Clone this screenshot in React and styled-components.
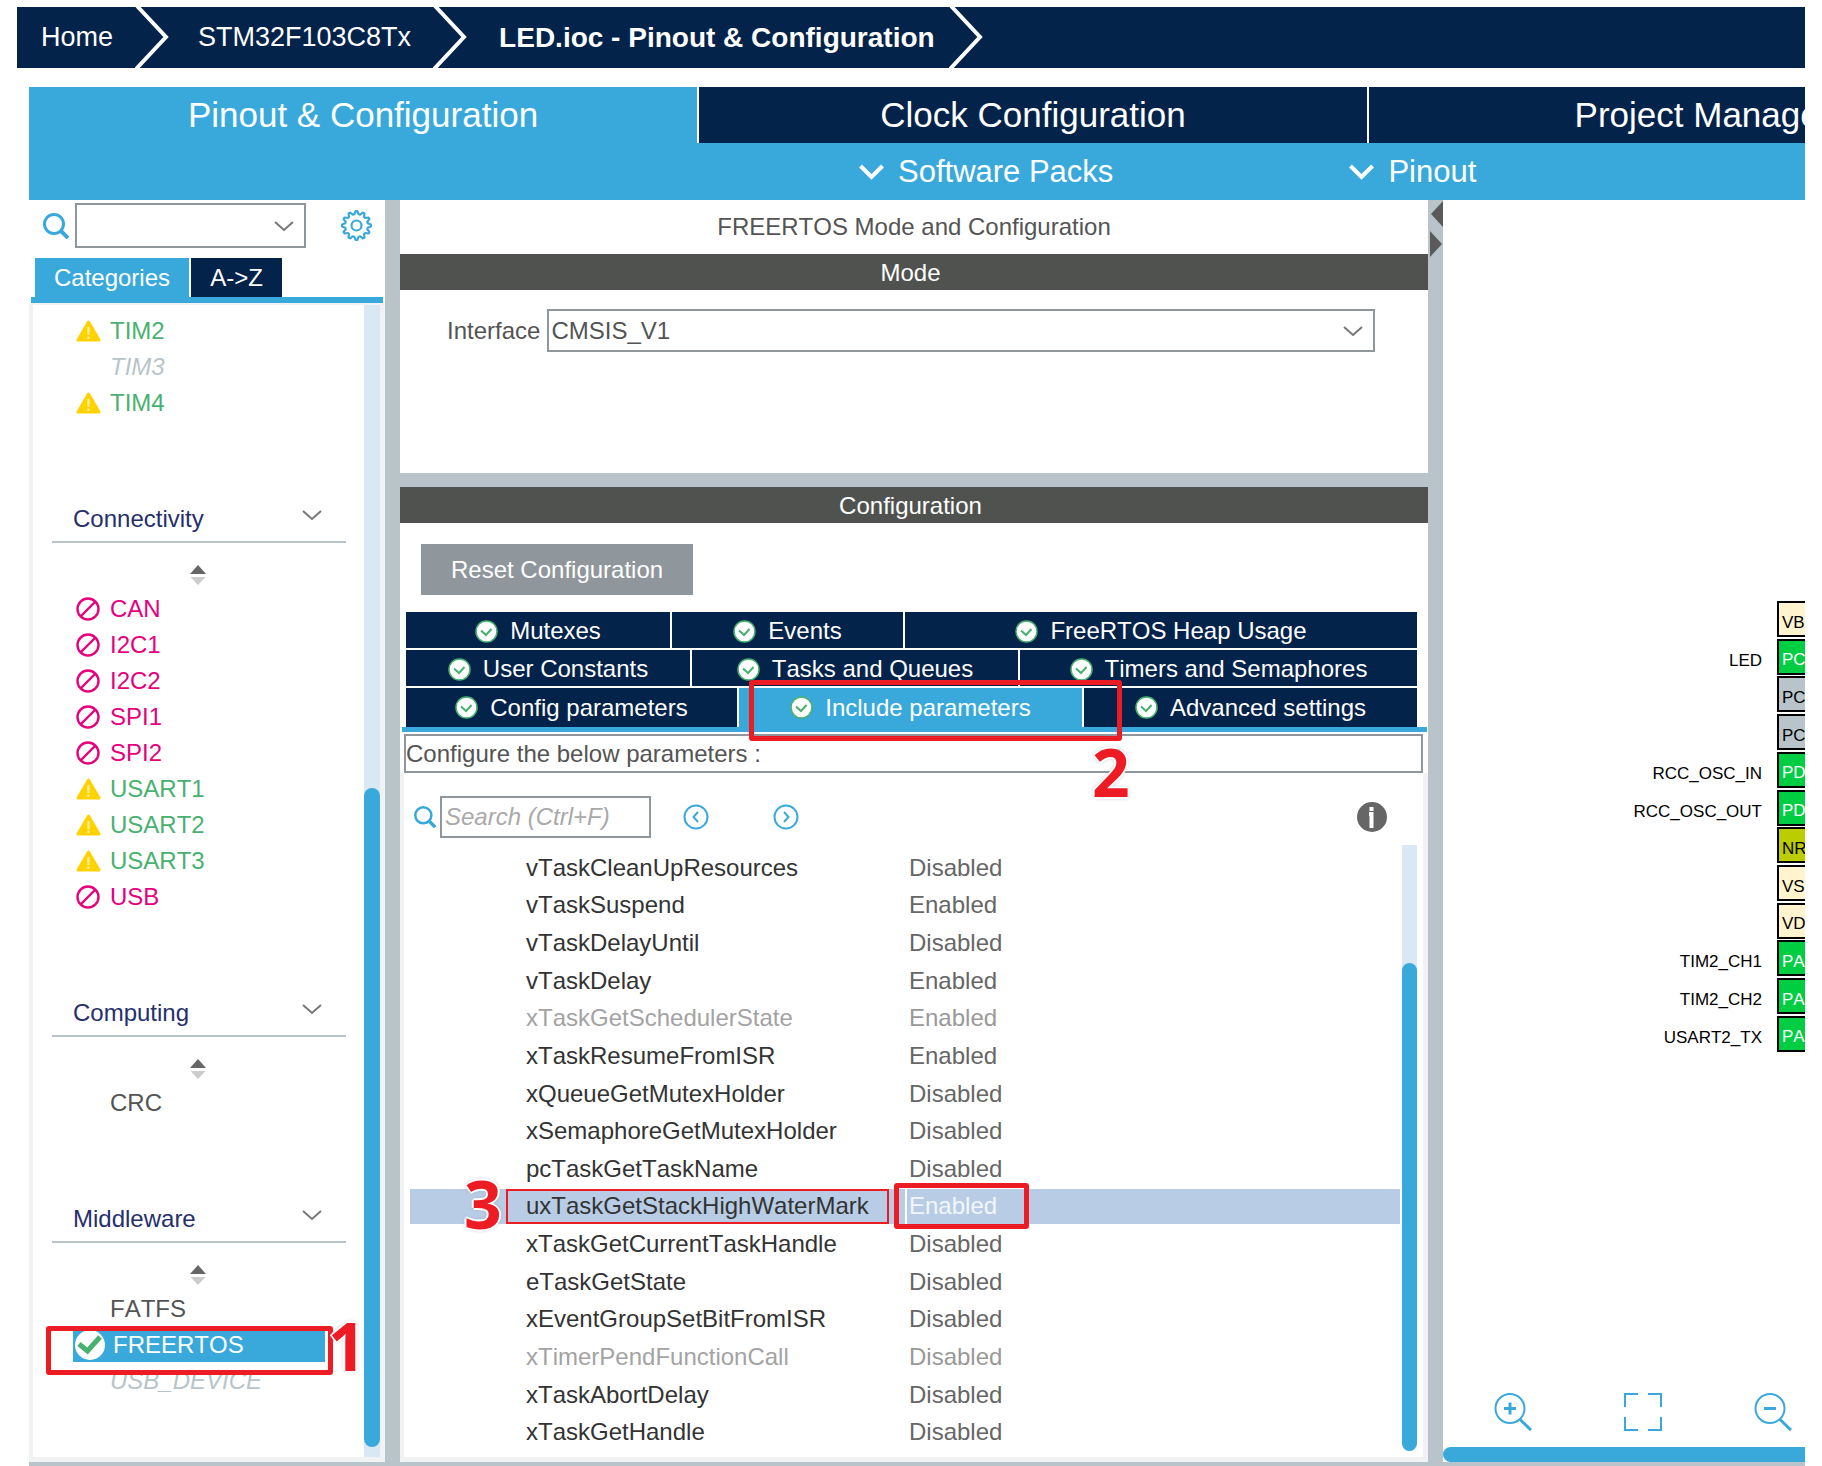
import React from 'react';
import styled, { createGlobalStyle, css } from 'styled-components';

const navy = '#03234b';
const blue = '#39a9dc';
const slate = '#b8c4ca';
const frame = '#f0f2f3';
const outline = '#8f979c';
const ink = '#545454';
const red = '#ed1c24';

const GlobalStyle = createGlobalStyle`
  *, *::before, *::after { box-sizing: border-box; }
  body { margin: 0; background: #fff; }
  body, button, input, select, table {
    font-family: "Liberation Sans", Arial, sans-serif;
    font-size: 24px;
    font-kerning: none;
    color: ${ink};
  }
  button { border: 0; padding: 0; background: none; cursor: pointer; }
  ul, ol { list-style: none; margin: 0; padding: 0; }
  h2, h3 { margin: 0; font-weight: 400; }
  svg { display: block; flex: none; }
`;

/* ---------- page frame ---------- */

const Page = styled.div`
  display: flex;
  flex-direction: column;
  min-height: 100vh;
  padding: 7px 17px 0;
  overflow: hidden;
`;

const Breadcrumbs = styled.ol`
  display: flex;
  align-items: stretch;
  height: 61px;
  margin-bottom: 19px;
  background: ${navy};
`;

const Crumb = styled.li`
  display: flex;
  align-items: center;
  a {
    padding: 0 22px 0 29px;
    color: #fff;
    font-size: 27px;
    text-decoration: none;
    white-space: nowrap;
    ${(p) => p.$current && css`
      padding: 0 14px 0 32px;
      font-size: 28px;
      font-weight: 700;
    `}
  }
  &:first-child a { padding-left: 24px; }
`;

const Shell = styled.div`
  display: flex;
  flex: 1;
  flex-direction: column;
  margin-left: 12px;
  border-bottom: 4px solid ${slate};
`;

const MainTabs = styled.div`
  display: flex;
  gap: 2px;
  height: 56px;
  overflow: hidden;
`;

const MainTab = styled.button`
  flex: 0 0 668px;
  background: ${(p) => (p.$active ? blue : navy)};
  color: #fff;
  font-size: 35px;
`;

const SubBar = styled.div`
  display: flex;
  align-items: center;
  gap: 236px;
  height: 57px;
  padding-left: 830px;
  background: ${blue};
`;

const SubMenu = styled.button`
  display: flex;
  align-items: center;
  gap: 14px;
  color: #fff;
  font-size: 31px;
  white-space: nowrap;
`;

const Workspace = styled.div`
  display: grid;
  flex: 1;
  grid-template-columns: 356px 15px minmax(0, 1fr) 15px 362px;
`;

const Divider = styled.div`
  display: flex;
  flex-direction: column;
  align-items: flex-end;
  gap: 4px;
  padding-top: 1px;
  background: ${slate};
`;

/* ---------- annotations ---------- */

const Mark = styled.span`
  position: absolute;
  z-index: 2;
  left: ${(p) => p.$x}px;
  top: ${(p) => p.$y}px;
  width: ${(p) => p.$w}px;
  height: ${(p) => p.$h}px;
  border: ${(p) => p.$line || 5}px solid ${red};
  border-radius: ${(p) => (p.$line ? 0 : 3)}px;
  pointer-events: none;
`;

const Step = styled.span`
  position: absolute;
  z-index: 3;
  left: ${(p) => p.$x}px;
  top: ${(p) => p.$y}px;
  color: ${red};
  font: 700 66px/66px "Noto Sans", "Open Sans", sans-serif;
  text-shadow: 2px 0 #fff, -2px 0 #fff, 0 2px #fff, 0 -2px #fff, 1px 1px #fff,
    -1px -1px #fff, 0 0 4px #888;
  pointer-events: none;
`;

/* ---------- shared controls ---------- */

const SelectBox = styled.div`
  position: relative;
  width: ${(p) => (p.$wide ? 'auto' : '231px')};
  flex: ${(p) => (p.$wide ? 1 : 'none')};
  select {
    display: block;
    width: 100%;
    height: ${(p) => (p.$wide ? 43 : 45)}px;
    padding: 0 40px 0 2px;
    border: 2px solid ${outline};
    border-radius: 0;
    background: #fff;
    appearance: none;
  }
  svg {
    position: absolute;
    right: 12px;
    top: 50%;
    margin-top: -5px;
    pointer-events: none;
  }
`;

const Thumb = styled.div`
  width: 100%;
  background: ${blue};
  border-radius: 8px;
`;

/* ---------- category panel ---------- */

const Sidebar = styled.aside`
  display: flex;
  flex-direction: column;
`;

const Finder = styled.div`
  display: flex;
  align-items: center;
  gap: 6px;
  padding: 3px 13px 10px 14px;
  button { margin-left: auto; }
`;

const SideTabs = styled.div`
  display: flex;
  gap: 2px;
  margin: 0 2px;
  padding-left: 4px;
  border-bottom: 6px solid ${blue};
`;

const SideTab = styled.button`
  height: 39px;
  width: ${(p) => (p.$active ? 154 : 91)}px;
  background: ${(p) => (p.$active ? blue : navy)};
  color: #fff;
`;

const TreeFrame = styled.div`
  display: flex;
  flex: 1;
  border: solid ${frame};
  border-width: 2px 5px 5px 4px;
`;

const Tree = styled.div`
  flex: 1;
  padding-top: 8px;
`;

const TreeTrack = styled.div`
  display: flex;
  flex-direction: column;
  justify-content: flex-end;
  width: 16px;
  padding-bottom: 10px;
  background: #d9e8f5;
  ${Thumb} { height: 659px; }
`;

const GroupHead = styled.h3`
  display: flex;
  align-items: flex-end;
  height: 122px;
  margin: 0 18px 0 19px;
  border-bottom: 2px solid ${slate};
  button {
    display: flex;
    flex: 1;
    align-items: center;
    justify-content: space-between;
    padding: 0 24px 6px 21px;
    color: #262f6c;
    line-height: 32px;
  }
  svg { margin-bottom: 7px; }
`;

const SortRow = styled.div`
  display: flex;
  align-items: flex-start;
  justify-content: center;
  height: 48px;
  padding: 22px 2px 0 0;
`;

const tones = { warn: '#49b170', off: '#e6007e', none: ink, dim: '#b8c4ca', on: '#fff' };

const Item = styled.li`
  position: relative;
  display: flex;
  align-items: center;
  height: 36px;
  margin: 0 39px 0 40px;
  a {
    display: flex;
    flex: 1;
    align-items: center;
    height: 33px;
    padding-left: ${(p) => (p.$tone === 'on' ? 2 : 3)}px;
    background: ${(p) => (p.$tone === 'on' ? blue : 'none')};
    color: ${(p) => tones[p.$tone]};
    font-style: ${(p) => (p.$tone === 'dim' ? 'italic' : 'normal')};
    text-decoration: none;
  }
`;

const IconSlot = styled.span`
  flex: none;
  width: ${(p) => (p.$large ? 38 : 34)}px;
`;

/* ---------- configuration column ---------- */

const Center = styled.main`
  display: flex;
  flex-direction: column;
  background: #fff;
`;

const Title = styled.h2`
  padding: ${(p) => (p.$bar ? '1px 7px 0 0' : '1px 0')};
  background: ${(p) => (p.$bar ? '#50524f' : '#fff')};
  color: ${(p) => (p.$bar ? '#fff' : ink)};
  font-size: 24px;
  line-height: ${(p) => (p.$bar ? 35 : 52)}px;
  text-align: center;
`;

const ModeBody = styled.div`
  display: flex;
  align-items: flex-start;
  gap: 7px;
  height: 197px;
  padding: 19px 53px 0 47px;
  border-bottom: 14px solid ${slate};
  label { line-height: 43px; }
`;

const ResetButton = styled.button`
  align-self: flex-start;
  height: 51px;
  margin: 21px 0 17px 21px;
  padding: 0 30px;
  background: ${outline};
  color: #fff;
`;

const ConfigTabs = styled.div`
  display: flex;
  flex-direction: column;
  gap: 2px;
  margin: 0 1px 2px 2px;
  padding: 0 10px 0 4px;
  border-bottom: 5px solid ${blue};
`;

const TabRow = styled.div`
  display: grid;
  grid-template-columns: ${(p) => p.$cols};
  gap: 2px;
  height: ${(p) => (p.$last ? 39 : 36)}px;
`;

const ConfigTab = styled.button`
  position: relative;
  display: flex;
  align-items: center;
  justify-content: center;
  gap: 12px;
  padding: ${(p) => (p.$last ? 0 : '2px 0 0')};
  background: ${(p) => (p.$active ? blue : navy)};
  color: #fff;
  white-space: nowrap;
`;

const Hint = styled.p`
  height: 39px;
  margin: 0 5px 0 4px;
  border: 2px solid ${outline};
  line-height: 36px;
`;

const ParamFrame = styled.section`
  display: flex;
  flex: 1;
  flex-direction: column;
  border: solid ${frame};
  border-width: 0 5px 5px 4px;
`;

const SearchRow = styled.div`
  display: flex;
  align-items: center;
  padding: 23px 36px 7px 10px;
  label { margin-right: 4px; }
  input {
    width: 211px;
    height: 42px;
    margin-right: 32px;
    padding: 0 3px;
    border: 2px solid ${outline};
    border-radius: 0;
    font-style: italic;
  }
  input::placeholder { color: #a9a9a9; opacity: 1; }
  button + button { margin-left: 64px; }
  button:last-child { margin-left: auto; }
`;

const ParamArea = styled.div`
  display: flex;
  gap: 2px;
  padding: 0 6px;
`;

const ParamTable = styled.table`
  flex: 1;
  height: 604px;
  margin-top: 3px;
  border-collapse: separate;
  border-spacing: 0 2px;
  table-layout: fixed;
`;

const ParamRow = styled.tr`
  background: ${(p) => (p.$selected ? '#b8cde5' : 'transparent')};
  th, td {
    position: relative;
    padding: 0;
    font-weight: 400;
    line-height: 28px;
    text-align: left;
    white-space: nowrap;
  }
  th {
    width: 495px;
    padding-left: 116px;
    color: ${(p) => (p.$dim ? '#a3a3a3' : '#333')};
  }
  td {
    padding-left: 2px;
    border-left: 2px solid ${(p) => (p.$selected ? '#fff' : 'transparent')};
    color: ${(p) => (p.$selected ? '#f2f6fa' : p.$dim ? '#999' : '#666')};
  }
`;

const ParamTrack = styled.div`
  display: flex;
  flex-direction: column;
  justify-content: flex-end;
  width: 15px;
  height: 606px;
  background: #d9e8f5;
  border-radius: 0 0 8px 8px;
  ${Thumb} { height: 488px; }
`;

/* ---------- chip view ---------- */

const ChipView = styled.section`
  display: flex;
  flex-direction: column;
  justify-content: space-between;
  overflow: hidden;
`;

const Pins = styled.ul`
  display: flex;
  flex-direction: column;
  justify-content: space-between;
  height: 451px;
  margin-top: 401px;
`;

const Pin = styled.li`
  display: flex;
  justify-content: flex-end;
  height: 36px;
  font-size: 17px;
  line-height: 43px;
  color: #000;
  span { margin-right: 15px; }
`;

const kinds = { power: '#fff4cd', used: '#00ce42', free: '#b8c4ca', reset: '#bbcc00' };

const Pad = styled.button`
  width: 28px;
  height: 36px;
  padding: 7px 0 0 3px;
  overflow: hidden;
  border: 2px solid #000;
  border-right: 0;
  background: ${(p) => kinds[p.$kind]};
  color: ${(p) => (p.$kind === 'used' ? '#fff' : '#000')};
  font-size: 17px;
  text-align: left;
  white-space: nowrap;
`;

const ViewTools = styled.div`
  display: flex;
  justify-content: space-between;
  padding: 0 13px 16px 51px;
`;

const ViewBar = styled.div`
  height: 15px;
  background: ${blue};
  border-radius: 8px 0 0 8px;
`;

/* ---------- icons ---------- */

const Chevron = ({ w = 20, h = 11, color = '#777', stroke = 2 }) => (
  <svg width={w} height={h} viewBox={`0 0 ${w} ${h}`} fill="none" stroke={color} strokeWidth={stroke}>
    <path d={`M1 1 L${w / 2} ${h - 2} L${w - 1} 1`} />
  </svg>
);

const CrumbArrow = () => (
  <svg width="34" height="61" viewBox="0 0 34 61" fill="none" stroke="#fff" strokeWidth="4">
    <path d="M2 -1 L31 30 L1 62" />
  </svg>
);

const MenuArrow = () => (
  <svg width="25" height="17" viewBox="0 0 25 17" fill="none" stroke="#fff" strokeWidth="4">
    <path d="M1.500 3 L12.500 14 L23.500 3" />
  </svg>
);

const Magnifier = ({ size }) => (
  <svg width={size} height={size} viewBox="0 0 26 26" fill="none" stroke={blue} strokeWidth="3">
    <circle cx="11" cy="11" r="9.500" />
    <path d="M17.500 17.500 L25 25" strokeWidth="4" />
  </svg>
);

const gearPath = () => {
  const pts = [];
  for (let i = 0; i < 48; i += 1) {
    const r = i % 4 < 2 ? 14.4 : 11.4;
    const a = ((i - 0.5) / 48) * Math.PI * 2;
    pts.push(`${(15.5 + r * Math.cos(a)).toFixed(1)} ${(15.5 + r * Math.sin(a)).toFixed(1)}`);
  }
  return `M${pts.join('L')}Z`;
};

const Gear = () => (
  <svg width="31" height="31" viewBox="0 0 31 31" fill="none" stroke={blue} strokeWidth="2.200" strokeLinejoin="round">
    <path d={gearPath()} />
    <circle cx="15.500" cy="15.500" r="5" />
  </svg>
);

const Warning = () => (
  <svg width="25" height="22" viewBox="0 0 25 22">
    <path d="M12.500 2 L23 20 H2 Z" fill="#ffd200" stroke="#ffd200" strokeWidth="3" strokeLinejoin="round" />
    <path d="M12.500 7 V15 M12.500 16.500 V19" stroke="#fff3b0" strokeWidth="2" />
  </svg>
);

const Forbidden = () => (
  <svg width="24" height="24" viewBox="0 0 24 24" fill="none" stroke="#e6007e" strokeWidth="2.400">
    <circle cx="12" cy="12" r="10.500" />
    <path d="M4.500 19.500 L19.500 4.500" />
  </svg>
);

const CheckLarge = () => (
  <svg width="30" height="30" viewBox="0 0 30 30">
    <circle cx="15" cy="15" r="15" fill="#fff" />
    <path d="M4 14 L12.500 21 L25 7" fill="none" stroke="#49b170" strokeWidth="5" />
  </svg>
);

const CheckSmall = () => (
  <svg width="23" height="23" viewBox="0 0 23 23">
    <circle cx="11.500" cy="11.500" r="10.500" fill="#fff" stroke="#49b170" strokeWidth="1.500" />
    <path d="M6 10.500 L11 15 L16.500 9" fill="none" stroke="#49b170" strokeWidth="2" />
  </svg>
);

const Sort = () => (
  <svg width="16" height="20" viewBox="0 0 16 20">
    <path d="M8 0 L16 9 H0 Z" fill="#666" />
    <path d="M8 20 L15.500 12 H0.500 Z" fill="#ccc" />
  </svg>
);

const Collapse = ({ flip }) => (
  <svg width="13" height="26" viewBox="0 0 13 26">
    <path d={flip ? 'M0 0 L12 13 L0 26 Z' : 'M13 0 L1 13 L13 26 Z'} fill="#5a5a5a" />
  </svg>
);

const Round = ({ next }) => (
  <svg width="26" height="26" viewBox="0 0 26 26" fill="none" stroke={blue} strokeWidth="2">
    <circle cx="13" cy="13" r="11.500" />
    <path d={next ? 'M11 8 L15.500 13 L11 18' : 'M15 8 L10.500 13 L15 18'} />
  </svg>
);

const Info = () => (
  <svg width="30" height="30" viewBox="0 0 30 30">
    <circle cx="15" cy="15" r="15" fill="#666" />
    <path d="M14.500 5 V9 M12 12 H14.500 V26" fill="none" stroke="#fff" strokeWidth="4" />
  </svg>
);

const Zoom = ({ plus }) => (
  <svg width="38" height="38" viewBox="0 0 38 38" fill="none" stroke={blue} strokeWidth="2">
    <circle cx="16" cy="15.500" r="14.500" />
    <path d="M26 26.500 L37 37" strokeWidth="3" />
    <path d={plus ? 'M10 15.500 H22 M16 9.500 V21.500' : 'M10 15.500 H22'} strokeWidth="3" />
  </svg>
);

const Fit = () => (
  <svg width="38" height="38" viewBox="0 0 38 38" fill="none" stroke={blue} strokeWidth="2">
    <path d="M1 14 V1 H14 M24 1 H37 V14 M37 24 V37 H24 M14 37 H1 V24" />
  </svg>
);

/* ---------- data ---------- */

const timers = [['TIM2', 'warn'], ['TIM3', 'dim'], ['TIM4', 'warn']];

const groups = [
  {
    name: 'Connectivity',
    items: [
      ['CAN', 'off'], ['I2C1', 'off'], ['I2C2', 'off'], ['SPI1', 'off'], ['SPI2', 'off'],
      ['USART1', 'warn'], ['USART2', 'warn'], ['USART3', 'warn'], ['USB', 'off'],
    ],
  },
  { name: 'Computing', items: [['CRC', 'none']] },
  { name: 'Middleware', items: [['FATFS', 'none'], ['FREERTOS', 'on'], ['USB_DEVICE', 'dim']] },
];

const tabRows = [
  { cols: '264fr 231fr 512fr', tabs: ['Mutexes', 'Events', 'FreeRTOS Heap Usage'] },
  { cols: '284fr 326fr 397fr', tabs: ['User Constants', 'Tasks and Queues', 'Timers and Semaphores'] },
  { cols: '331fr 343fr 333fr', tabs: ['Config parameters', 'Include parameters', 'Advanced settings'] },
];

const params = [
  ['vTaskCleanUpResources', 'Disabled'],
  ['vTaskSuspend', 'Enabled'],
  ['vTaskDelayUntil', 'Disabled'],
  ['vTaskDelay', 'Enabled'],
  ['xTaskGetSchedulerState', 'Enabled', 'dim'],
  ['xTaskResumeFromISR', 'Enabled'],
  ['xQueueGetMutexHolder', 'Disabled'],
  ['xSemaphoreGetMutexHolder', 'Disabled'],
  ['pcTaskGetTaskName', 'Disabled'],
  ['uxTaskGetStackHighWaterMark', 'Enabled', 'selected'],
  ['xTaskGetCurrentTaskHandle', 'Disabled'],
  ['eTaskGetState', 'Disabled'],
  ['xEventGroupSetBitFromISR', 'Disabled'],
  ['xTimerPendFunctionCall', 'Disabled', 'dim'],
  ['xTaskAbortDelay', 'Disabled'],
  ['xTaskGetHandle', 'Disabled'],
];

const pins = [
  ['VBAT', 'power'], ['PC13', 'used', 'LED'], ['PC14', 'free'], ['PC15', 'free'],
  ['PD0', 'used', 'RCC_OSC_IN'], ['PD1', 'used', 'RCC_OSC_OUT'], ['NRST', 'reset'],
  ['VSSA', 'power'], ['VDDA', 'power'], ['PA0', 'used', 'TIM2_CH1'],
  ['PA1', 'used', 'TIM2_CH2'], ['PA2', 'used', 'USART2_TX'],
];

/* ---------- composition ---------- */

const Items = ({ items }) => (
  <ul>
    {items.map(([name, tone]) => (
      <Item key={name} $tone={tone}>
        <a href={`#${name}`}>
          <IconSlot $large={tone === 'on'}>
            {tone === 'warn' && <Warning />}
            {tone === 'off' && <Forbidden />}
            {tone === 'on' && <CheckLarge />}
          </IconSlot>
          {name}
        </a>
        {tone === 'on' && (
          <>
            <Mark $x={-27} $y={-1} $w={287} $h={49} />
            <Step $x={255} $y={-15}>1</Step>
          </>
        )}
      </Item>
    ))}
  </ul>
);

export default function App() {
  return (
    <Page>
      <GlobalStyle />
      <nav aria-label="Breadcrumb">
        <Breadcrumbs>
          {['Home', 'STM32F103C8Tx', 'LED.ioc - Pinout & Configuration'].map((text, i) => (
            <Crumb key={text} $current={i === 2}>
              <a href="#top">{text}</a>
              <CrumbArrow />
            </Crumb>
          ))}
        </Breadcrumbs>
      </nav>
      <Shell>
        <MainTabs>
          <MainTab $active>Pinout &amp; Configuration</MainTab>
          <MainTab>Clock Configuration</MainTab>
          <MainTab>Project Manager</MainTab>
        </MainTabs>
        <SubBar>
          <SubMenu><MenuArrow />Software Packs</SubMenu>
          <SubMenu><MenuArrow />Pinout</SubMenu>
        </SubBar>
        <Workspace>
          <Sidebar>
            <Finder>
              <label htmlFor="find" aria-label="Find peripheral"><Magnifier size={26} /></label>
              <SelectBox>
                <select id="find" defaultValue=""><option value="" /></select>
                <Chevron />
              </SelectBox>
              <button aria-label="Settings"><Gear /></button>
            </Finder>
            <SideTabs>
              <SideTab $active>Categories</SideTab>
              <SideTab>A-&gt;Z</SideTab>
            </SideTabs>
            <TreeFrame>
              <Tree>
                <Items items={timers} />
                {groups.map((g) => (
                  <section key={g.name}>
                    <GroupHead><button>{g.name}<Chevron /></button></GroupHead>
                    <SortRow><Sort /></SortRow>
                    <Items items={g.items} />
                  </section>
                ))}
              </Tree>
              <TreeTrack><Thumb /></TreeTrack>
            </TreeFrame>
          </Sidebar>
          <Divider />
          <Center>
            <Title>FREERTOS Mode and Configuration</Title>
            <Title $bar>Mode</Title>
            <ModeBody>
              <label htmlFor="interface">Interface</label>
              <SelectBox $wide>
                <select id="interface"><option>CMSIS_V1</option></select>
                <Chevron />
              </SelectBox>
            </ModeBody>
            <Title $bar>Configuration</Title>
            <ResetButton>Reset Configuration</ResetButton>
            <ConfigTabs>
              {tabRows.map((row, i) => (
                <TabRow key={row.cols} $cols={row.cols} $last={i === 2}>
                  {row.tabs.map((name) => {
                    const active = name === 'Include parameters';
                    return (
                      <ConfigTab key={name} $active={active} $last={i === 2}>
                        <CheckSmall />
                        {name}
                        {active && (
                          <>
                            <Mark $x={10} $y={-8} $w={373} $h={61} />
                            <Step $x={353} $y={50}>2</Step>
                          </>
                        )}
                      </ConfigTab>
                    );
                  })}
                </TabRow>
              ))}
            </ConfigTabs>
            <Hint>Configure the below parameters :</Hint>
            <ParamFrame>
              <SearchRow>
                <label htmlFor="search" aria-label="Search"><Magnifier size={22} /></label>
                <input id="search" placeholder="Search (Ctrl+F)" />
                <button aria-label="Previous"><Round /></button>
                <button aria-label="Next"><Round next /></button>
                <button aria-label="Information"><Info /></button>
              </SearchRow>
              <ParamArea>
                <ParamTable>
                  <tbody>
                    {params.map(([name, value, state]) => (
                      <ParamRow key={name} $selected={state === 'selected'} $dim={state === 'dim'}>
                        <th scope="row">
                          {name}
                          {state === 'selected' && (
                            <>
                              <Mark $x={96} $y={0} $w={383} $h={35} $line={2} />
                              <Step $x={54} $y={-19}>3</Step>
                            </>
                          )}
                        </th>
                        <td>
                          {value}
                          {state === 'selected' && <Mark $x={-13} $y={-6} $w={135} $h={46} />}
                        </td>
                      </ParamRow>
                    ))}
                  </tbody>
                </ParamTable>
                <ParamTrack><Thumb /></ParamTrack>
              </ParamArea>
            </ParamFrame>
          </Center>
          <Divider>
            <Collapse />
            <Collapse flip />
          </Divider>
          <ChipView>
            <Pins>
              {pins.map(([name, kind, signal]) => (
                <Pin key={name}>
                  {signal && <span>{signal}</span>}
                  <Pad $kind={kind}>{name}</Pad>
                </Pin>
              ))}
            </Pins>
            <div>
              <ViewTools>
                <button aria-label="Zoom in"><Zoom plus /></button>
                <button aria-label="Fit to view"><Fit /></button>
                <button aria-label="Zoom out"><Zoom /></button>
              </ViewTools>
              <ViewBar />
            </div>
          </ChipView>
        </Workspace>
      </Shell>
    </Page>
  );
}
